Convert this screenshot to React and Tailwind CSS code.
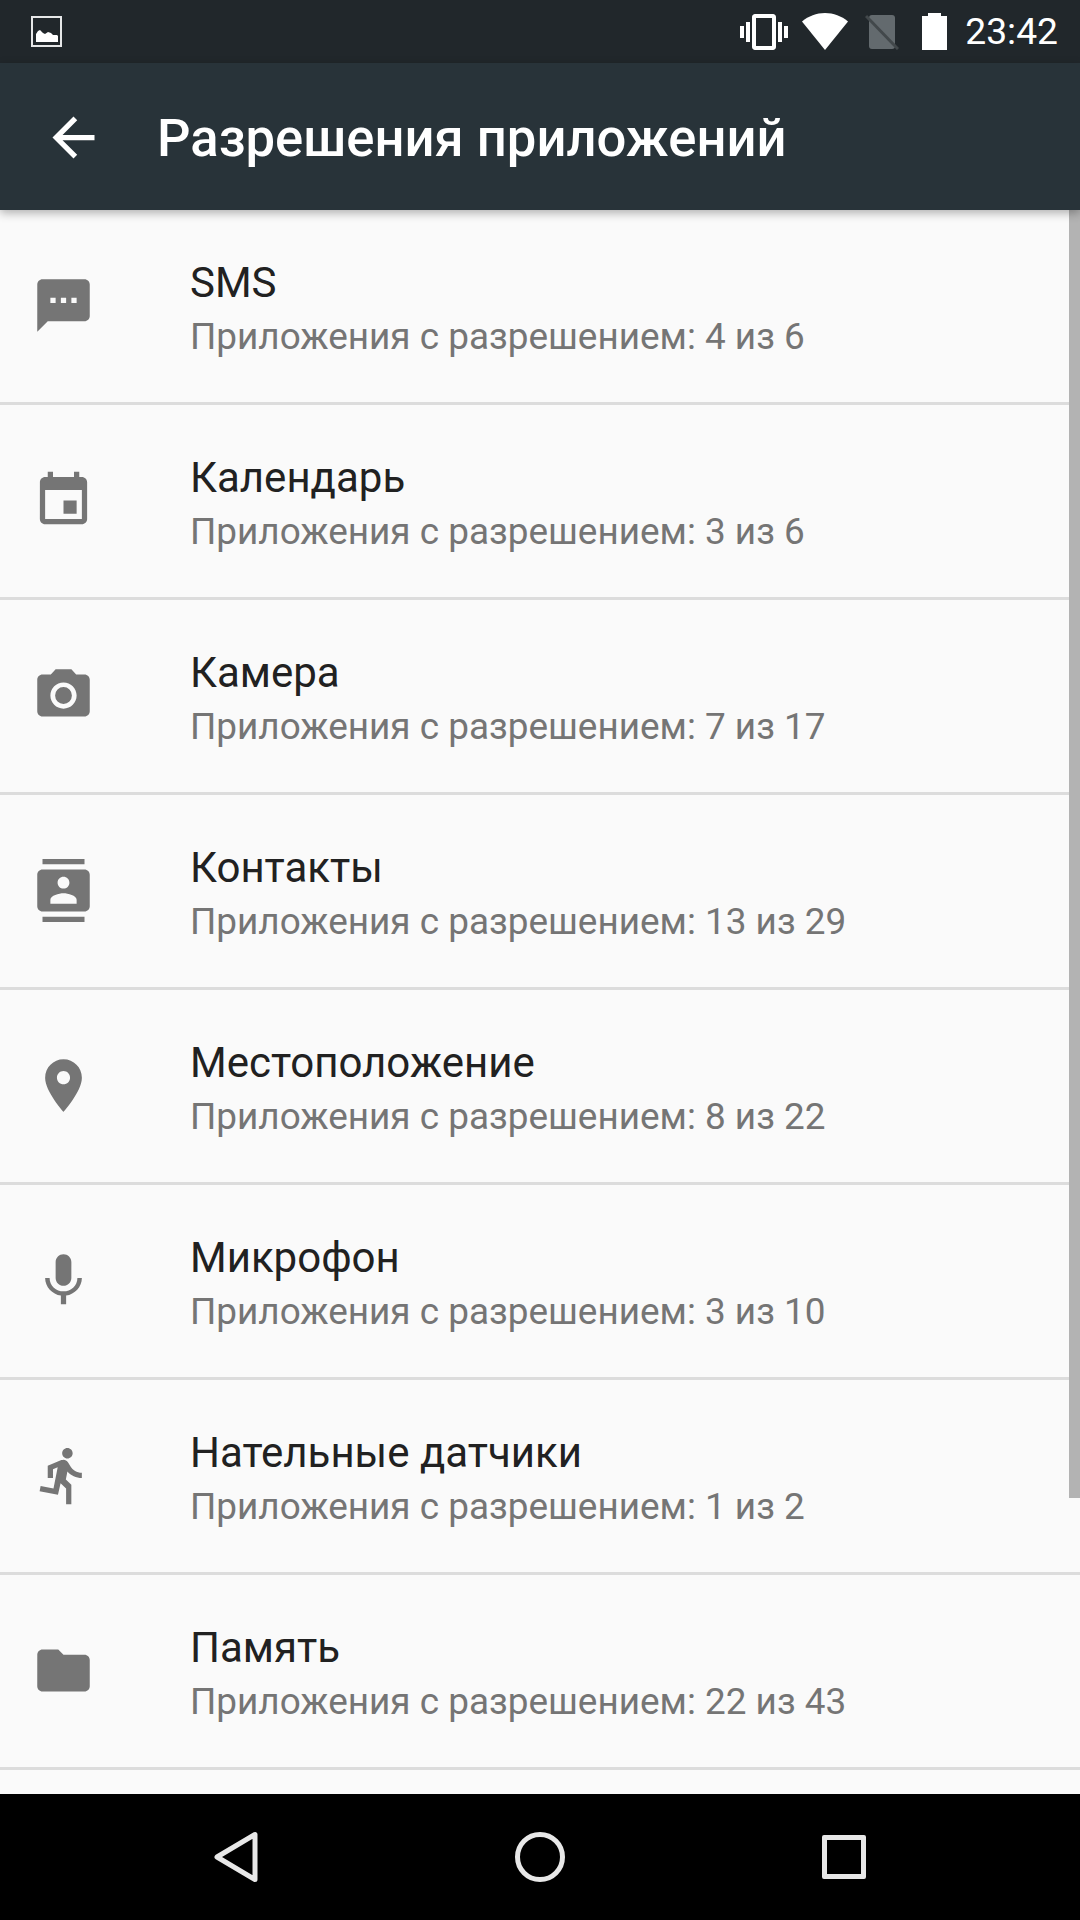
import React from "react";

const icons = {
  sms: "M20 2H4c-1.1 0-1.99.9-1.99 2L2 22l4-4h14c1.1 0 2-.9 2-2V4c0-1.1-.9-2-2-2zM9 11H7V9h2v2zm4 0h-2V9h2v2zm4 0h-2V9h2v2z",
  calendar: "M17 12h-5v5h5v-5zM16 1v2H8V1H6v2H5c-1.11 0-1.99.9-1.99 2L3 19c0 1.1.89 2 2 2h14c1.1 0 2-.9 2-2V5c0-1.1-.9-2-2-2h-1V1h-2zm3 18H5V8h14v11z",
  camera: "M12 8.8a3.2 3.2 0 1 0 0 6.4 3.2 3.2 0 0 0 0-6.4zM9 2L7.17 4H4c-1.1 0-2 .9-2 2v12c0 1.1.9 2 2 2h16c1.1 0 2-.9 2-2V6c0-1.1-.9-2-2-2h-3.17L15 2H9zm3 15c-2.76 0-5-2.24-5-5s2.24-5 5-5 5 2.24 5 5-2.24 5-5 5z",
  contacts: "M20 0H4v2h16V0zM4 24h16v-2H4v2zM20 4H4c-1.1 0-2 .9-2 2v12c0 1.1.9 2 2 2h16c1.1 0 2-.9 2-2V6c0-1.1-.9-2-2-2zm-8 2.75c1.24 0 2.25 1.01 2.25 2.25s-1.01 2.25-2.25 2.25S9.75 10.24 9.75 9 10.76 6.75 12 6.75zM17 17H7v-1.5c0-1.67 3.33-2.5 5-2.5s5 .83 5 2.5V17z",
  place: "M12 2C8.13 2 5 5.13 5 9c0 5.25 7 13 7 13s7-7.75 7-13c0-3.87-3.13-7-7-7zm0 9.5c-1.38 0-2.5-1.12-2.5-2.5s1.12-2.5 2.5-2.5 2.5 1.12 2.5 2.5-1.12 2.5-2.5 2.5z",
  mic: "M12 14c1.66 0 2.99-1.34 2.99-3L15 5c0-1.66-1.34-3-3-3S9 3.34 9 5v6c0 1.66 1.34 3 3 3zm5.3-3c0 3-2.54 5.1-5.3 5.1S6.7 14 6.7 11H5c0 3.41 2.72 6.23 6 6.72V21h2v-3.28c3.28-.48 6-3.3 6-6.72h-1.7z",
  run: "M13.49 5.48c1.1 0 2-.9 2-2s-.9-2-2-2-2 .9-2 2 .9 2 2 2zm-3.6 13.9l1-4.4 2.1 2v6h2v-7.5l-2.1-2 .6-3c1.3 1.5 3.3 2.5 5.5 2.5v-2c-1.9 0-3.5-1-4.3-2.4l-1-1.6c-.4-.6-1-1-1.7-1-.3 0-.5.1-.8.1l-5.2 2.2v4.7h2v-3.4l1.8-.7-1.6 8.1-4.9-1-.4 2 7 1.4z",
  folder: "M10 4H4c-1.1 0-1.99.9-1.99 2L2 18c0 1.1.9 2 2 2h16c1.1 0 2-.9 2-2V8c0-1.1-.9-2-2-2h-8l-2-2z",
};

const rows = [
  { icon: "sms", title: "SMS", sub: "Приложения с разрешением: 4 из 6" },
  { icon: "calendar", title: "Календарь", sub: "Приложения с разрешением: 3 из 6" },
  { icon: "camera", title: "Камера", sub: "Приложения с разрешением: 7 из 17" },
  { icon: "contacts", title: "Контакты", sub: "Приложения с разрешением: 13 из 29" },
  { icon: "place", title: "Местоположение", sub: "Приложения с разрешением: 8 из 22" },
  { icon: "mic", title: "Микрофон", sub: "Приложения с разрешением: 3 из 10" },
  { icon: "run", title: "Нательные датчики", sub: "Приложения с разрешением: 1 из 2" },
  { icon: "folder", title: "Память", sub: "Приложения с разрешением: 22 из 43" },
];

function StatusBar() {
  return (
    <div className="h-[63px] shrink-0 bg-[#21272b] flex items-center justify-between pl-[31px] pr-[22px]">
      <svg width="32" height="32" viewBox="0 0 32 32">
        <rect x="1" y="1" width="29" height="29" fill="none" stroke="#e6e7e8" strokeWidth="2" />
        <path d="M5 26v-8l2-3 2-1 3 3 2 1 3-2 3 1 2 2 4 0 1 1v6z" fill="#fff" />
      </svg>
      <div className="flex items-center">
        <svg width="48" height="48" viewBox="0 0 24 24" fill="#fff">
          <path d="M0 15h2V9H0v6zm3 2h2V7H3v10zm19-8v6h2V9h-2zm-3 8h2V7h-2v10zM16.5 3h-9C6.67 3 6 3.67 6 4.5v15c0 .83.67 1.5 1.5 1.5h9c.83 0 1.5-.67 1.5-1.5v-15c0-.83-.67-1.5-1.5-1.5zM16 19H8V5h8v14z" />
        </svg>
        <svg width="46" height="37" viewBox="0 0 46 37" fill="#fff" className="ml-[14px]">
          <path d="M23 37 0 8.5C6.5 3 14.5 0 23 0s16.5 3 23 8.5z" />
        </svg>
        <svg width="34" height="36" viewBox="0 0 34 36" className="ml-[17px]">
          <path d="M4 4a3 3 0 0 1 3-3h20a3 3 0 0 1 3 3v28a3 3 0 0 1-3 3H7a3 3 0 0 1-3-3z" fill="#636a6e" />
          <path d="M1 2 33 35" stroke="#42484b" strokeWidth="3" />
        </svg>
        <svg width="25" height="37" viewBox="0 0 25 37" fill="#fff" className="ml-[23px]">
          <path d="M6 3V0h13v3h6v34H0V3z" />
        </svg>
        <span className="ml-[18px] text-[37.25px] leading-none text-white">23:42</span>
      </div>
    </div>
  );
}

function Toolbar() {
  return (
    <div className="relative z-10 h-[147px] shrink-0 bg-[#283339] flex items-center pl-[42px] shadow-[0_3px_9px_rgba(0,0,0,0.3)]">
      <svg width="63" height="63" viewBox="0 0 24 24" fill="#fff" className="shrink-0 mt-[1px]">
        <path d="M20 11H7.83l5.59-5.59L12 4l-8 8 8 8 1.41-1.41L7.83 13H20v-2z" />
      </svg>
      <h1 className="ml-[52px] pt-[3px] text-[52.6px] leading-none font-medium text-white">Разрешения приложений</h1>
    </div>
  );
}

function Row({ icon, title, sub }) {
  return (
    <div className="h-[195px] shrink-0 border-b-[3px] border-[#dcdcdc] flex items-center">
      <div className="w-[190px] shrink-0 pl-[32px] pb-[2px]">
        <svg width="63" height="63" viewBox="0 0 24 24" fill="#757575">
          <path d={icons[icon]} />
        </svg>
      </div>
      <div className="flex flex-col pt-[7px]">
        <span className="text-[42px] leading-[54px] text-[#212121]">{title}</span>
        <span className="text-[36.9px] leading-[54px] text-[#757575]">{sub}</span>
      </div>
    </div>
  );
}

function NavBar() {
  return (
    <div className="h-[126px] shrink-0 bg-black flex items-center pl-[214px]">
      <svg width="44" height="52" viewBox="0 0 44 52" fill="none" stroke="#e8e8e8" strokeWidth="5" strokeLinejoin="round">
        <path d="M41 3.5v45L3 26z" />
      </svg>
      <div className="ml-[257px] w-[50px] h-[50px] rounded-full border-[5px] border-[#e8e8e8]" />
      <div className="ml-[257px] w-[44px] h-[44px] rounded-[2px] border-[5px] border-[#e8e8e8]" />
    </div>
  );
}

export default function App() {
  return (
    <div className="w-[1080px] h-[1920px] flex flex-col bg-[#fafafa] overflow-hidden font-['Roboto',sans-serif]">
      <StatusBar />
      <Toolbar />
      <div className="relative flex-1 flex flex-col overflow-hidden">
        {rows.map((r) => (
          <Row key={r.icon} {...r} />
        ))}
        {/* scrollbar */}
        <div className="absolute top-0 right-0 w-[11px] h-[1288px] bg-[#b3b3b3]" />
      </div>
      <NavBar />
    </div>
  );
}
